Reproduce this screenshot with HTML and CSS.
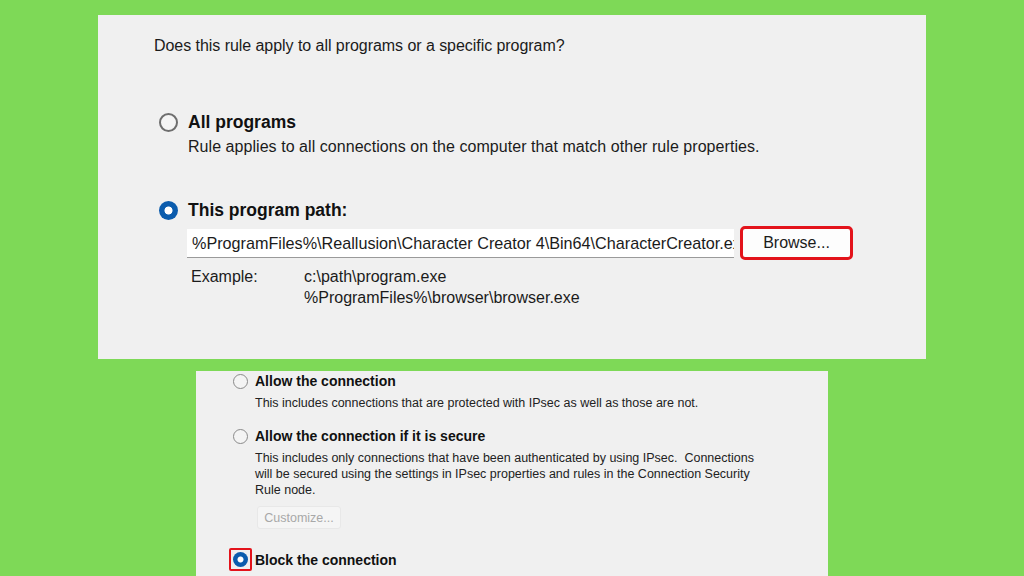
FILE: index.html
```html
<!DOCTYPE html>
<html lang="en">
<head>
  <meta charset="UTF-8" />
  <meta name="viewport" content="width=device-width, initial-scale=1.0" />
  <title>New Outbound Rule Wizard</title>
  <link rel="stylesheet" href="styles.css">
</head>
<body>

<!-- program step of the wizard -->
<section class="panel panel-program">
  <p class="question">Does this rule apply to all programs or a specific program?</p>

  <div class="option option-all">
    <div class="option-head">
      <span class="radio"></span>
      <span class="label">All programs</span>
    </div>
    <p class="desc">Rule applies to all connections on the computer that match other rule properties.</p>
  </div>

  <div class="option option-path">
    <div class="option-head">
      <span class="radio checked"></span>
      <span class="label">This program path:</span>
    </div>
    <div class="path-row">
      <div class="path-input">%ProgramFiles%\Reallusion\Character Creator 4\Bin64\CharacterCreator.exe</div>
      <button class="btn browse">Browse...</button>
    </div>
    <div class="example">
      <span class="example-label">Example:</span>
      <div class="example-paths">
        <div>c:\path\program.exe</div>
        <div>%ProgramFiles%\browser\browser.exe</div>
      </div>
    </div>
  </div>
</section>

<!-- action step of the wizard -->
<section class="panel panel-action">
  <div class="action">
    <div class="action-head">
      <span class="radio small"></span>
      <span class="action-label">Allow the connection</span>
    </div>
    <p class="action-desc">This includes connections that are protected with IPsec as well as those are not.</p>
  </div>

  <div class="action action-secure">
    <div class="action-head">
      <span class="radio small"></span>
      <span class="action-label">Allow the connection if it is secure</span>
    </div>
    <p class="action-desc">This includes only connections that have been authenticated by using IPsec.&nbsp; Connections<br>will be secured using the settings in IPsec properties and rules in the Connection Security<br>Rule node.</p>
    <button class="btn customize" disabled>Customize...</button>
  </div>

  <div class="action action-block">
    <div class="action-head">
      <span class="radio-mark"><span class="radio small checked"></span></span>
      <span class="action-label">Block the connection</span>
    </div>
  </div>
</section>

</body>
</html>
```

FILE: styles.css
```css
body {
  margin: 0;
  width: 1024px;
  height: 576px;
  overflow: hidden;
  background: #7ed957;
  font-family: "Liberation Sans", Arial, sans-serif;
  color: #1b1b1b;
}

.panel {
  background: #f0f0f0;
  box-sizing: border-box;
}

.panel-program {
  width: 828px;
  height: 344px;
  margin: 15px 0 0 98px;
  padding: 21px 0 0 56px;
}

.question {
  margin: 0;
  font-size: 16px;
  line-height: 19px;
  letter-spacing: -0.05px;
}

.option-head {
  display: flex;
  align-items: center;
  gap: 10px;
  margin-left: 5px;
}

.label {
  font-weight: bold;
  font-size: 17.5px;
  color: #111;
}

.desc {
  margin: 4px 0 0 34px;
  font-size: 16px;
  line-height: 19px;
  letter-spacing: 0.05px;
}

.option-all {
  margin-top: 57px;
}

.option-path {
  margin-top: 44px;
}

/* radio buttons */
.radio {
  width: 19px;
  height: 19px;
  border-radius: 50%;
  border: 2px solid #6e6e6e;
  box-sizing: border-box;
  background: #f4f4f4;
  flex: none;
}

.radio.checked {
  border: none;
  background: radial-gradient(circle, #fff 0 3.6px, #0b5cad 4.4px);
}

.radio.small {
  width: 15px;
  height: 15px;
  border-width: 1.5px;
  border-color: #8a8a8a;
}

.radio.small.checked {
  background: radial-gradient(circle, #fff 0 2.6px, #0b5cad 3.4px);
}

.path-row {
  display: flex;
  align-items: center;
  gap: 6px;
  margin: 5px 0 0 33px;
}

/* path text runs past the box, as in the real edit control */
.path-input {
  width: 542px;
  height: 28px;
  line-height: 28px;
  padding-left: 5px;
  background: #fff;
  border-bottom: 1px solid #9a9a9a;
  white-space: nowrap;
  overflow: hidden;
  font-size: 16.2px;
}

.btn {
  font-family: inherit;
  cursor: default;
}

.browse {
  width: 113px;
  height: 34px;
  background: #fdfdfd;
  border: 3px solid #e3131b;
  border-radius: 5px;
  font-size: 16px;
  color: #1b1b1b;
}

.example {
  display: flex;
  margin: 6px 0 0 37px;
  font-size: 16px;
  line-height: 21px;
}

.example-label {
  width: 113px;
}

/* bottom panel: action choices */
.panel-action {
  width: 632px;
  height: 205px;
  margin: 12px 0 0 196px;
  padding: 2px 0 0 37px;
  font-size: 12.5px;
}

.action-head {
  display: flex;
  align-items: center;
  gap: 7px;
}

.action-label {
  font-weight: bold;
  font-size: 14px;
  color: #111;
}

.action-desc {
  margin: 6px 0 0 22px;
  line-height: 16px;
  color: #222;
}

.action-secure {
  margin-top: 17px;
}

.customize {
  margin: 8px 0 0 24px;
  width: 84px;
  height: 23px;
  background: #f5f5f5;
  border: 1px solid #e8e8e8;
  border-radius: 3px;
  font-size: 12.5px;
  color: #a8a8a8;
}

.action-block {
  margin-top: 19px;
}

.radio-mark {
  display: flex;
  align-items: center;
  justify-content: center;
  width: 23px;
  height: 23px;
  margin-left: -4px;
  margin-right: -4px;
  box-sizing: border-box;
  border: 2px solid #e3131b;
  border-radius: 2px;
}
```
